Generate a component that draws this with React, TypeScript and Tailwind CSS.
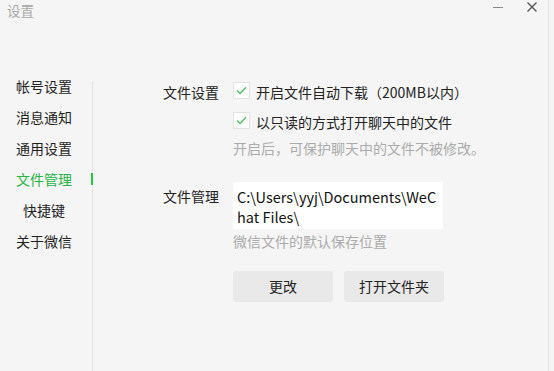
import React from "react";

const font = { fontFamily: '"Noto Sans CJK SC", "Noto Sans", sans-serif' };

function Check() {
  return (
    <span className="mt-[1px] flex h-[17px] w-[17px] shrink-0 items-center justify-center border border-[#e2e2e2] bg-white">
      <svg width="11" height="9" viewBox="0 0 11 9" fill="none">
        <path d="M1 4.5 L4 7.5 L10 1.2" stroke="#4cc05a" strokeWidth="1.4" />
      </svg>
    </span>
  );
}

export default function App() {
  const nav = ["帐号设置", "消息通知", "通用设置", "文件管理", "快捷键", "关于微信"];
  return (
    <div className="flex h-[371px] w-[554px] bg-[#f5f5f5] text-[14px] text-[#333]" style={font}>
      <div className="flex h-full w-[549px] flex-col border-r border-[#e4e4e4]">
        <div className="flex h-[70px] items-start justify-between">
          <span className="pl-[7px] pt-[1px] text-[13.5px] leading-[18px] text-[#a8a8a8]">设置</span>
          <div className="flex items-start">
            <span className="mr-[24px] mt-[7px] h-px w-[10px] bg-[#8a8a8a]" />
            <svg className="mr-[11px] mt-[2px]" width="10" height="10" viewBox="0 0 10 10">
              <path d="M0.5 0.5 L9.5 9.5 M9.5 0.5 L0.5 9.5" stroke="#555" strokeWidth="1.4" />
            </svg>
          </div>
        </div>
        <div className="flex flex-1">
          <div className="flex w-[92px] flex-col">
            {nav.map((n) => (
              <div key={n} className="relative flex h-[31px] items-center">
                <span
                  className={
                    "ml-[16px] w-[56px] text-center leading-[20px] " +
                    (n === "文件管理" ? "text-[#27b343]" : "text-[#1f1f1f]")
                  }
                >
                  {n}
                </span>
                {n === "文件管理" && (
                  <span className="absolute right-[-1px] top-[10px] h-[12px] w-[2px] bg-[#1fd12f]" />
                )}
              </div>
            ))}
          </div>
          <div className="mt-[11px] w-px bg-[#e4e4e4]" />
          <div className="flex flex-col pl-[70px] pt-[11px]">
            <div className="flex">
              <span className="w-[70px] leading-[22px] text-[#222]">文件设置</span>
              <div className="flex flex-col">
                <div className="flex h-[22px] items-start gap-[6px]">
                  <Check />
                  <span className="leading-[22px] text-[#222]">开启文件自动下载（200MB以内）</span>
                </div>
                <div className="mt-[8px] flex h-[22px] items-start gap-[6px]">
                  <Check />
                  <span className="leading-[22px] text-[#222]">以只读的方式打开聊天中的文件</span>
                </div>
                <span className="mt-[5px] leading-[20px] text-[#ababab]">开启后，可保护聊天中的文件不被修改。</span>
              </div>
            </div>
            <div className="mt-[24px] flex">
              <span className="w-[70px] pt-[4px] leading-[20px] text-[#222]">文件管理</span>
              <div className="flex flex-col">
                <div className="h-[47px] w-[210px] bg-white pl-[4px] pt-[5px] text-[14.5px] leading-[20px] text-[#111]">
                  <div>C:\Users\yyj\Documents\WeC</div>
                  <div>hat Files\</div>
                </div>
                <span className="mt-[2px] leading-[20px] text-[#ababab]">微信文件的默认保存位置</span>
                <div className="mt-[20px] flex gap-[11px]">
                  <button className="h-[31px] w-[100px] rounded-[3px] bg-[#e9e9e9] text-[#222]">更改</button>
                  <button className="h-[31px] w-[100px] rounded-[3px] bg-[#e9e9e9] text-[#222]">打开文件夹</button>
                </div>
              </div>
            </div>
          </div>
        </div>
      </div>
    </div>
  );
}
